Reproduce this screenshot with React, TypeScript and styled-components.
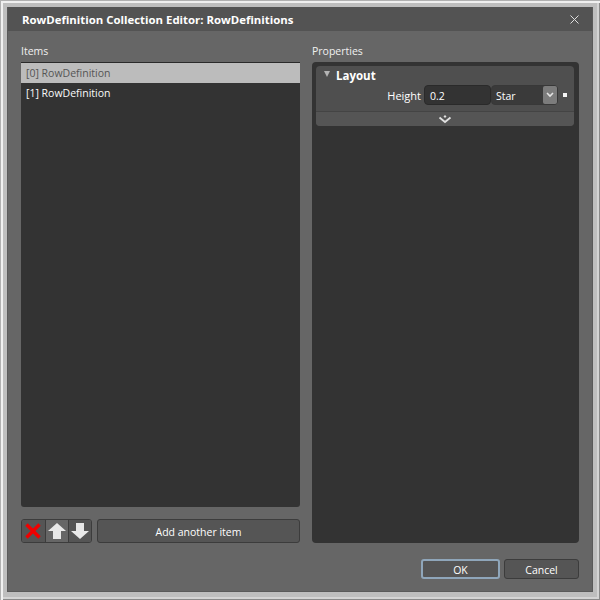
import styled, { createGlobalStyle } from 'styled-components';

const GlobalStyle = createGlobalStyle`
  html, body {
    margin: 0;
    padding: 0;
    background: #c4c4c4;
  }
`;

const Frame = styled.div`
  box-sizing: border-box;
  width: 600px;
  height: 600px;
  padding: 7px 7px 8px 7px;
  background: #bebebe;
  box-shadow: inset 1px 1px #b0b0b0, inset 3px 3px #f0f0f0, inset -1px -1px #8a8a8a, inset -3px -3px #d4d4d4;
  display: flex;
  font-family: 'Open Sans', 'Noto Sans', sans-serif;
  font-size: 11px;
  color: #f2f2f2;
`;

const Dialog = styled.div`
  flex: 1;
  display: flex;
  flex-direction: column;
  background: #666;
  border: 1px solid #5a5a5a;
  border-top: 0;
  min-width: 0;
`;

const Header = styled.div`
  height: 24px;
  flex: none;
  display: flex;
  align-items: center;
  justify-content: space-between;
  padding: 0 12px 0 14px;
  background: #535353;
`;

const Title = styled.div`
  font-size: 11.4px;
  font-weight: 700;
  color: #fff;
`;

const CloseIcon = styled.svg`
  width: 9px;
  height: 9px;
  margin-right: 1px;
`;

const Body = styled.div`
  flex: 1;
  display: grid;
  grid-template-columns: 279px 267px;
  column-gap: 12px;
  padding: 11px 13px 0 13px;
  min-height: 0;
`;

const Column = styled.div`
  display: flex;
  flex-direction: column;
`;

const Label = styled.div`
  height: 20px;
  line-height: 18px;
  font-size: 10.5px;
  color: #f0f0f0;
`;

const List = styled.div`
  height: 445px;
  box-sizing: border-box;
  background: #333;
  border-radius: 0 0 3px 3px;
  border-top: 1px solid #2a2a2a;
`;

const ListItem = styled.div<{ $selected?: boolean }>`
  height: 20px;
  line-height: 20px;
  padding-left: 5px;
  font-size: 10.5px;
  background: ${(p) => (p.$selected ? '#bcbcbc' : 'transparent')};
  color: ${(p) => (p.$selected ? '#555' : '#fafafa')};
`;

const ListActions = styled.div`
  display: flex;
  margin-top: 12px;
  height: 24px;
`;

const IconGroup = styled.div`
  display: flex;
  margin-right: 5px;
  border: 1px solid #3c3c3c;
  border-radius: 3px;
  overflow: hidden;
`;

const IconButton = styled.div<{ $lit?: boolean }>`
  box-sizing: border-box;
  width: 23px;
  display: flex;
  align-items: center;
  justify-content: center;
  background: ${(p) => (p.$lit ? '#666' : '#555')};
  & + & {
    border-left: 1px solid #3c3c3c;
  }
`;

const Button = styled.div<{ $default?: boolean }>`
  box-sizing: border-box;
  display: flex;
  align-items: center;
  justify-content: center;
  padding-top: 1px;
  background: #555;
  border-radius: 3px;
  color: #fff;
  font-size: 10.5px;
  border: ${(p) => (p.$default ? '2px solid #8fa6ba' : '1px solid #3c3c3c')};
`;

const AddButton = styled(Button)`
  flex: 1;
`;

const PropertiesPanel = styled.div`
  height: 481px;
  box-sizing: border-box;
  background: #333;
  border-radius: 4px;
  padding: 4px 5px 0 4px;
`;

const Section = styled.div`
  background: #4f4f4f;
  border-radius: 4px;
  height: 60px;
  display: flex;
  flex-direction: column;
`;

const SectionHead = styled.div`
  display: flex;
  align-items: center;
  height: 20px;
  padding-left: 8px;
  gap: 6px;
  font-size: 11.5px;
  font-weight: 700;
  color: #fff;
`;

const Triangle = styled.span`
  width: 0;
  height: 0;
  margin-top: -4px;
  border-left: 3px solid transparent;
  border-right: 3px solid transparent;
  border-top: 6px solid #b4b4b4;
`;

const PropRow = styled.div`
  display: flex;
  align-items: center;
  height: 20px;
  padding-left: 68px;
`;

const PropName = styled.div`
  width: 37px;
  text-align: right;
  font-size: 11px;
  margin-right: 3px;
  color: #fff;
`;

const ValueBox = styled.div`
  box-sizing: border-box;
  width: 67px;
  height: 20px;
  line-height: 20px;
  padding-left: 5px;
  background: #333;
  border: 1px solid #2a2a2a;
  border-radius: 4px;
  font-size: 10.5px;
  color: #fff;
`;

const Select = styled(ValueBox)`
  display: flex;
  justify-content: space-between;
  padding: 0 0 0 4px;
  border-color: #383838;
  background: #3a3a3a;
`;

const SelectArrow = styled.div`
  width: 14px;
  height: 18px;
  display: flex;
  align-items: center;
  justify-content: center;
  background: #7c7c7c;
  border-radius: 2px;
`;

const Marker = styled.span`
  width: 4px;
  height: 4px;
  margin-left: 5px;
  background: #f4f4f4;
`;

const Expander = styled.div`
  height: 14px;
  margin-top: 6px;
  border-top: 1px solid #444;
  background: #555;
  border-radius: 0 0 4px 4px;
  display: flex;
  align-items: center;
  justify-content: center;
`;

const Footer = styled.div`
  display: flex;
  justify-content: flex-end;
  gap: 4px;
  height: 20px;
  padding: 0 13px 12px 0;
`;

const OkButton = styled(Button)`
  width: 79px;
`;

const CancelButton = styled(Button)`
  width: 75px;
`;

const Chevron = () => (
  <svg width="8" height="6" viewBox="0 0 8 6">
    <path d="M1 1l3 3 3-3" fill="none" stroke="#e4e4e4" strokeWidth="1.6" />
  </svg>
);

const App = () => (
  <>
    <GlobalStyle />
    <Frame>
      <Dialog>
        <Header>
          <Title>RowDefinition Collection Editor: RowDefinitions</Title>
          <CloseIcon viewBox="0 0 9 9">
            <path d="M.5.5l8 8M8.5.5l-8 8" stroke="#dedede" strokeWidth="1" fill="none" />
          </CloseIcon>
        </Header>
        <Body>
          <Column>
            <Label>Items</Label>
            <List>
              <ListItem $selected>[0] RowDefinition</ListItem>
              <ListItem>[1] RowDefinition</ListItem>
            </List>
            <ListActions>
              <IconGroup>
                <IconButton>
                  <svg width="18" height="18" viewBox="0 0 18 18">
                    <path d="M1.5 2.5l13 13M14.5 2.5l-13 13" stroke="#f00000" strokeWidth="3.4" fill="none" />
                  </svg>
                </IconButton>
                <IconButton $lit>
                  <svg width="20" height="18" viewBox="0 0 20 18">
                    <path d="M10 1l9 8h-5v8H6V9H1z" fill="#e8e8e8" />
                  </svg>
                </IconButton>
                <IconButton>
                  <svg width="20" height="18" viewBox="0 0 20 18">
                    <path d="M6 1h8v8h5l-9 8-9-8h5z" fill="#e8e8e8" />
                  </svg>
                </IconButton>
              </IconGroup>
              <AddButton>Add another item</AddButton>
            </ListActions>
          </Column>
          <Column>
            <Label>Properties</Label>
            <PropertiesPanel>
              <Section>
                <SectionHead>
                  <Triangle />
                  Layout
                </SectionHead>
                <PropRow>
                  <PropName>Height</PropName>
                  <ValueBox>0.2</ValueBox>
                  <Select>
                    Star
                    <SelectArrow>
                      <Chevron />
                    </SelectArrow>
                  </Select>
                  <Marker />
                </PropRow>
                <Expander>
                  <svg width="14" height="9" viewBox="0 0 14 9">
                    <path d="M7 0l1.5 1.5L7 3 5.5 1.5z" fill="#e0e0e0" />
                    <path d="M1.5 2.5L7 7l5.5-4.5" fill="none" stroke="#e0e0e0" strokeWidth="1.8" />
                  </svg>
                </Expander>
              </Section>
            </PropertiesPanel>
          </Column>
        </Body>
        <Footer>
          <OkButton $default>OK</OkButton>
          <CancelButton>Cancel</CancelButton>
        </Footer>
      </Dialog>
    </Frame>
  </>
);

export default App;
